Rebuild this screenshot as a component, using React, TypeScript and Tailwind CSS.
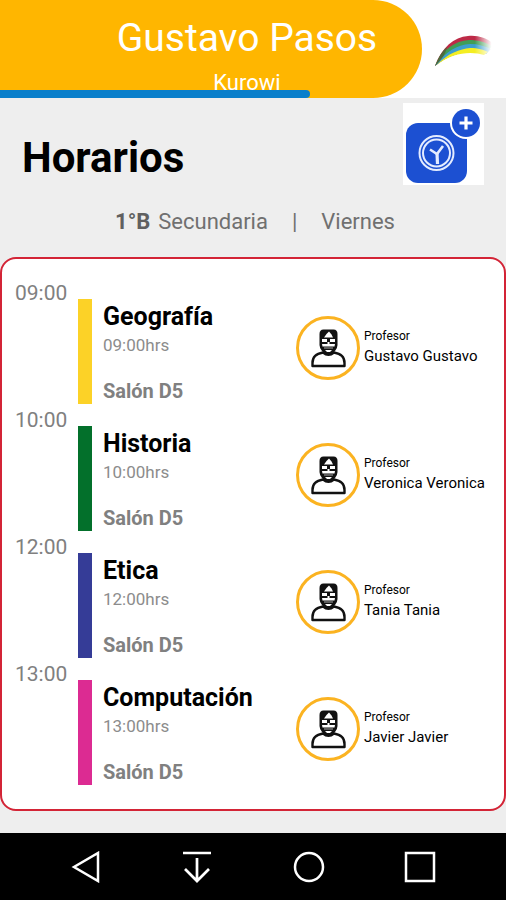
interface ClassItem {
  subject: string;
  time: string;
  room: string;
  teacher: string;
  color: string;
}

const classes: ClassItem[] = [
  {
    subject: "Geografía",
    time: "09:00",
    room: "Salón D5",
    teacher: "Gustavo Gustavo",
    color: "bg-[#fcd227]",
  },
  {
    subject: "Historia",
    time: "10:00",
    room: "Salón D5",
    teacher: "Veronica Veronica",
    color: "bg-[#03702b]",
  },
  {
    subject: "Etica",
    time: "12:00",
    room: "Salón D5",
    teacher: "Tania Tania",
    color: "bg-[#353c97]",
  },
  {
    subject: "Computación",
    time: "13:00",
    room: "Salón D5",
    teacher: "Javier Javier",
    color: "bg-[#dc2b92]",
  },
];

// Rainbow logo of the school, each band is painted over the previous one
function Logo() {
  return (
    <svg viewBox="0 0 60 36" className="w-[60px]" aria-hidden="true">
      <defs>
        <linearGradient id="fade" x1="0" x2="1">
          <stop offset="0.68" stopColor="#fff" />
          <stop offset="0.96" stopColor="#000" />
        </linearGradient>
        <mask id="fadeMask">
          <rect width="60" height="36" fill="url(#fade)" />
        </mask>
        <filter id="soft">
          <feGaussianBlur stdDeviation="0.7" />
        </filter>
      </defs>
      <g mask="url(#fadeMask)" filter="url(#soft)">
        <path d="M1 33C8 14 20 4 34 3C44 2 52 5 59 10L52 21C38 17 18 18 1 33Z" fill="#bd2c46" />
        <path d="M1 33C9 16 21 8 35 7C44 7 51 9 58 13L52 21C38 17 18 18 1 33Z" fill="#3f9d55" />
        <path d="M1 33C12 18 23 12 36 11C44 11 51 13 57 16L52 21C38 17 18 18 1 33Z" fill="#3d9fcd" />
        <path d="M3 32C14 20 26 16 36 15C44 15 50 17 54 19L50 22C38 18 18 19 3 32Z" fill="#f4ee22" />
        <path d="M1 33C4 25 8 18 13 14C12 20 8 26 1 33Z" fill="#4d6a3c" />
      </g>
    </svg>
  );
}

function AddScheduleIcon() {
  return (
    <svg viewBox="0 0 81 82" className="w-[81px]" aria-hidden="true">
      <rect x="3" y="20" width="61" height="60" rx="12" fill="#1c50d2" />
      <circle cx="63" cy="20" r="16" fill="#fff" />
      <circle cx="63" cy="20" r="14" fill="#1c50d2" />
      <path d="M63 13.500V26.500M56.500 20H69.500" stroke="#fff" strokeWidth="3.200" />
      <g fill="none" stroke="#e4ecff">
        <circle cx="33.500" cy="50" r="17" strokeWidth="2" />
        <circle cx="33.500" cy="50" r="13.500" strokeWidth="2" />
        <path d="M27 46.500L34 51L40 43" strokeWidth="2.600" />
        <path d="M34 50L34.500 61" strokeWidth="3.200" />
      </g>
    </svg>
  );
}

function TeacherIcon() {
  return (
    <svg viewBox="0 0 36 40" className="w-9" aria-hidden="true">
      <path
        d="M2.500 38V35C2.500 28.500 6 26 13 24.500Q18.500 29 24 24.500C31 26 34.500 28.500 34.500 35V38Z"
        fill="#fff"
        stroke="#111"
        strokeWidth="2.400"
        strokeLinejoin="round"
      />
      {/* Head, then the white parts of the face */}
      <path
        d="M9.500 17V6Q9.500 1.500 13.500 1.500H23.500Q27.500 1.500 27.500 6V17Q27.500 20 25 23Q21.500 26.500 18.500 26.500Q15.500 26.500 12 23Q9.500 20 9.500 17Z"
        fill="#111"
      />
      <path d="M19 3.500L21.500 6.500L23 9.500H14L16.500 6Z" fill="#fff" />
      <path d="M12 11H17V14H12ZM20 11H25V14H20Z" fill="#fff" />
      <path d="M12 16H17.500V14H19.500V16H25L24.500 18.500H12.500Z" fill="#fff" />
      <path d="M14 20H23" stroke="#aaa" strokeWidth="1" />
      <path d="M15 22H22L20 24H17Z" fill="#fff" />
    </svg>
  );
}

function ClassRow({ item }: { item: ClassItem }) {
  return (
    <li className="flex h-[127px] items-start">
      <time className="w-[63px] text-[21px] leading-5 text-[#808080]">
        {item.time}
      </time>
      <div className={`mt-4 h-[105px] w-3.5 shrink-0 ${item.color}`} />

      <div className="mt-5 flex-1 pl-[11px]">
        <h2 className="text-[25px] leading-7 font-bold text-black">{item.subject}</h2>
        <p className="text-[17px] leading-7 text-[#8c8c8c]">{item.time}hrs</p>
        <p className="mt-[18px] text-[20px] leading-7 font-bold text-[#808080]">
          {item.room}
        </p>
      </div>

      {/* Teacher */}
      <div className="mt-[33px] flex w-[208px] items-start gap-1">
        <div className="flex size-16 shrink-0 items-center justify-center rounded-full border-[3px] border-[#fbb321]">
          <TeacherIcon />
        </div>
        <div className="pt-2.5 whitespace-nowrap text-black">
          <p className="text-xs leading-5">Profesor</p>
          <p className="text-[15px] leading-5">{item.teacher}</p>
        </div>
      </div>
    </li>
  );
}

function NavBar() {
  return (
    <nav className="mt-auto grid h-[67px] grid-cols-4 place-items-center bg-black px-[30px]">
      <button type="button" aria-label="Atrás">
        <svg viewBox="0 0 32 32" className="size-8" fill="none" stroke="#fff" strokeWidth="2.500">
          <path d="M28 2V30L4 16Z" />
        </svg>
      </button>
      <button type="button" aria-label="Ocultar">
        <svg viewBox="0 0 32 32" className="size-8" fill="none" stroke="#fff" strokeWidth="2.700">
          <path d="M2 2H30M16 7V29M4 18L16 30L28 18" />
        </svg>
      </button>
      <button type="button" aria-label="Inicio">
        <svg viewBox="0 0 32 32" className="size-8" fill="none" stroke="#fff" strokeWidth="2.500">
          <circle cx="16" cy="16" r="14" />
        </svg>
      </button>
      <button type="button" aria-label="Recientes">
        <svg viewBox="0 0 32 32" className="size-8" fill="none" stroke="#fff" strokeWidth="2.500">
          <rect x="2" y="2" width="28" height="28" />
        </svg>
      </button>
    </nav>
  );
}

function App() {
  return (
    <div className="flex min-h-screen flex-col bg-[#eeeeee] font-[Roboto,sans-serif]">
      {/* Header */}
      <header className="relative flex bg-white">
        <div className="h-[98px] flex-1 rounded-r-full bg-[#ffb600] pt-3.5 pl-[72px] text-center text-white">
          <p className="text-[39px] leading-[48px]">Gustavo Pasos</p>
          <p className="mt-[7px] text-[22px] leading-7">Kurowi</p>
        </div>
        <div className="flex w-[84px] items-center justify-center pt-1">
          <Logo />
        </div>
        <div className="absolute bottom-0 left-0 h-2 w-[310px] rounded-r-sm bg-[#0a7fcb]" />
      </header>

      <main>
        <div className="flex items-start justify-between pt-[5px] pr-[22px] pl-[22px]">
          <h1 className="pt-7 text-[42px] leading-[54px] font-bold text-black">
            Horarios
          </h1>
          <button type="button" aria-label="Agregar horario" className="bg-white">
            <AddScheduleIcon />
          </button>
        </div>

        <div className="flex justify-center gap-6 pt-[21px] pl-1 text-[22px] leading-8 text-[#707070]">
          <p className="flex gap-2">
            <b className="text-[#606060]">1°B</b>
            <span>Secundaria</span>
          </p>
          <span>|</span>
          <p>Viernes</p>
        </div>

        <ul className="mt-[19px] rounded-2xl border-2 border-[#d32436] bg-white pt-6 pb-[18px] pl-[13px]">
          {classes.map((item) => (
            <ClassRow key={item.subject} item={item} />
          ))}
        </ul>
      </main>

      <NavBar />
    </div>
  );
}

export default App;
